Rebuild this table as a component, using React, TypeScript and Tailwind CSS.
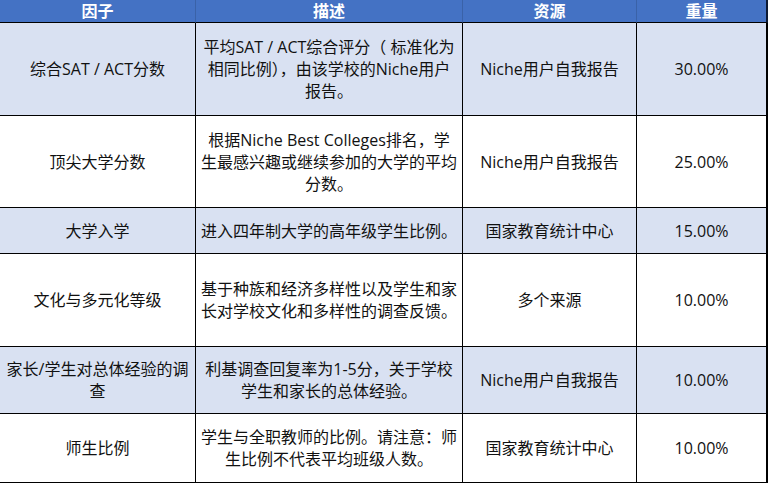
const font = { fontFamily: '"Open Sans", "Noto Sans CJK SC", sans-serif' }

type Row = {
  factor: string[]
  desc: string[]
  source: string
  weight: string
  shaded: boolean
  h: string
}

const rows: Row[] = [
  {
    factor: ['综合SAT / ACT分数'],
    desc: ['平均SAT / ACT综合评分（ 标准化为', '相同比例），由该学校的Niche用户', '报告。'],
    source: 'Niche用户自我报告',
    weight: '30.00%',
    shaded: true,
    h: 'h-[93px]',
  },
  {
    factor: ['顶尖大学分数'],
    desc: ['根据Niche Best Colleges排名，学', '生最感兴趣或继续参加的大学的平均', '分数。'],
    source: 'Niche用户自我报告',
    weight: '25.00%',
    shaded: false,
    h: 'h-[92px]',
  },
  {
    factor: ['大学入学'],
    desc: ['进入四年制大学的高年级学生比例。'],
    source: '国家教育统计中心',
    weight: '15.00%',
    shaded: true,
    h: 'h-[46px]',
  },
  {
    factor: ['文化与多元化等级'],
    desc: ['基于种族和经济多样性以及学生和家', '长对学校文化和多样性的调查反馈。'],
    source: '多个来源',
    weight: '10.00%',
    shaded: false,
    h: 'h-[93px]',
  },
  {
    factor: ['家长/学生对总体经验的调', '查'],
    desc: ['利基调查回复率为1-5分，关于学校', '学生和家长的总体经验。'],
    source: 'Niche用户自我报告',
    weight: '10.00%',
    shaded: true,
    h: 'h-[67px]',
  },
  {
    factor: ['师生比例'],
    desc: ['学生与全职教师的比例。请注意：师', '生比例不代表平均班级人数。'],
    source: '国家教育统计中心',
    weight: '10.00%',
    shaded: false,
    h: 'h-[69px]',
  },
]

function Cell({ lines, last }: { lines: string[]; last?: boolean }) {
  return (
    <div
      className={`flex items-center justify-center border-b border-black text-center leading-[22px] ${last ? 'border-r-2' : 'border-r'}`}
    >
      <div className="whitespace-nowrap">
        {lines.map((l, i) => (
          <div key={i}>{l}</div>
        ))}
      </div>
    </div>
  )
}

export default function App() {
  const cols = 'grid grid-cols-[196px_267px_174px_131px]'
  return (
    <div className="w-[768px] h-[484px] bg-white text-[16px] text-[#111] overflow-hidden" style={font}>
      <div className={`${cols} h-[23px] bg-[#4472c4] text-white font-bold text-[16px] leading-[22px]`}>
        {['因子', '描述', '资源', '重量'].map((t, i) => (
          <div
            key={t}
            className={`flex items-center justify-center border-b border-b-black ${i === 3 ? 'border-r-2 border-r-[#0d1a33]' : 'border-r border-r-[#3a62a8]'}`}
          >
            {t}
          </div>
        ))}
      </div>
      {rows.map((r, i) => (
        <div key={i} className={`${cols} ${r.h} ${r.shaded ? 'bg-[#d9e1f2]' : 'bg-white'}`}>
          <Cell lines={r.factor} />
          <Cell lines={r.desc} />
          <Cell lines={[r.source]} />
          <Cell lines={[r.weight]} last />
        </div>
      ))}
    </div>
  )
}
